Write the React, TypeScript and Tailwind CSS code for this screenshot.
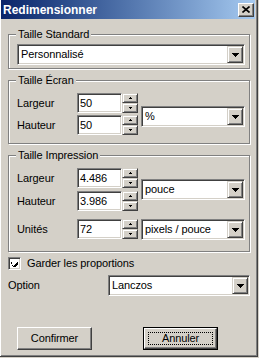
import React from 'react';

const sunken =
  'border border-t-[#808080] border-l-[#808080] border-b-white border-r-white shadow-[inset_1px_1px_0_#404040,inset_-1px_-1px_0_#d4d0c8] bg-white';
const raised =
  'border border-t-[#d4d0c8] border-l-[#d4d0c8] border-b-[#404040] border-r-[#404040] shadow-[inset_1px_1px_0_#fff,inset_-1px_-1px_0_#808080] bg-[#d4d0c8]';
const pushBtn =
  'border border-t-white border-l-white border-b-[#404040] border-r-[#404040] shadow-[inset_-1px_-1px_0_#808080] bg-[#d4d0c8]';

const DownArrow = () => (
  <svg width="7" height="4" viewBox="0 0 7 4" shapeRendering="crispEdges">
    <rect x="0" y="0" width="7" height="1" fill="#000" />
    <rect x="1" y="1" width="5" height="1" fill="#000" />
    <rect x="2" y="2" width="3" height="1" fill="#000" />
    <rect x="3" y="3" width="1" height="1" fill="#000" />
  </svg>
);

const TinyArrow = ({ up }: { up?: boolean }) => (
  <svg width="3" height="2" viewBox="0 0 3 2" shapeRendering="crispEdges">
    {up ? (
      <>
        <rect x="1" y="0" width="1" height="1" fill="#000" />
        <rect x="0" y="1" width="3" height="1" fill="#000" />
      </>
    ) : (
      <>
        <rect x="0" y="0" width="3" height="1" fill="#000" />
        <rect x="1" y="1" width="1" height="1" fill="#000" />
      </>
    )}
  </svg>
);

const Combo = ({ value, className }: { value: string; className: string }) => (
  <div className={`flex h-[21px] p-[1px] ${sunken} ${className}`}>
    <span className="flex-1 pl-[2px] leading-[17px]">{value}</span>
    <div className={`flex h-[17px] w-[16px] items-center justify-center ${raised}`}>
      <DownArrow />
    </div>
  </div>
);

const Spin = ({ value }: { value: string }) => (
  <>
    <div className={`h-[20px] w-[45px] p-[1px] ${sunken}`}>
      <span className="block pl-[1px] leading-[16px]">{value}</span>
    </div>
    <div className="flex h-[20px] w-[16px] flex-col">
      <div className={`flex h-[10px] items-center justify-center ${raised}`}>
        <TinyArrow up />
      </div>
      <div className={`flex h-[10px] items-center justify-center ${raised}`}>
        <TinyArrow />
      </div>
    </div>
  </>
);

const Group = ({
  title,
  className,
  children,
}: {
  title: string;
  className: string;
  children: React.ReactNode;
}) => (
  <div
    className={`relative w-[242px] border border-[#808080] shadow-[inset_1px_1px_0_#fff,1px_1px_0_#fff] pl-[8px] ${className}`}
  >
    <span className="absolute left-[7px] top-[-7px] bg-[#d4d0c8] px-[2px] leading-[13px]">
      {title}
    </span>
    {children}
  </div>
);

const Label = ({ text }: { text: string }) => (
  <span className="flex h-[20px] items-center">{text}</span>
);

export default function App() {
  return (
    <div className="h-[358px] w-[259px] bg-[#d4d0c8] font-['Liberation_Sans',Arial,sans-serif] text-[11px] tracking-[-0.1px] text-black">
      <div className="flex h-[357px] w-[258px] flex-col border-b border-r border-b-[#404040] border-r-[#404040] shadow-[inset_1px_0_0_#fff,inset_-1px_-1px_0_#808080]">
        {/* barre de titre */}
        <div className="ml-[1px] mr-[2px] flex h-[19px] items-center justify-between bg-gradient-to-r from-[#0a246a] to-[#a6caf0] pl-[2px] pr-[1px]">
          <span className="text-[12px] font-bold tracking-normal text-white">Redimensionner</span>
          <div className={`flex h-[14px] w-[16px] items-center justify-center ${pushBtn}`}>
            <svg width="8" height="7" viewBox="0 0 8 7">
              <path d="M0.5 0.5 L7.5 6.5 M7.5 0.5 L0.5 6.5" stroke="#000" strokeWidth="1.6" />
            </svg>
          </div>
        </div>

        <div className="flex flex-col pl-[8px]">
          <Group title="Taille Standard" className="mt-[15px] h-[35px] pt-[9px]">
            <Combo value="Personnalisé" className="w-[228px]" />
          </Group>

          <Group title="Taille Écran" className="mt-[11px] h-[64px] pt-[12px]">
            <div className="flex">
              <div className="grid grid-cols-[60px_45px_16px] gap-y-[2px]">
                <Label text="Largeur" />
                <Spin value="50" />
                <Label text="Hauteur" />
                <Spin value="50" />
              </div>
              <Combo value="%" className="ml-[3px] mt-[13px] w-[104px]" />
            </div>
          </Group>

          <Group title="Taille Impression" className="mt-[11px] h-[97px] pt-[12px]">
            <div className="flex">
              <div className="grid grid-cols-[60px_45px_16px] gap-y-[3px]">
                <Label text="Largeur" />
                <Spin value="4.486" />
                <Label text="Hauteur" />
                <Spin value="3.986" />
              </div>
              <Combo value="pouce" className="ml-[3px] self-center w-[104px]" />
            </div>
            <div className="mt-[8px] flex">
              <div className="grid grid-cols-[60px_45px_16px]">
                <Label text="Unités" />
                <Spin value="72" />
              </div>
              <Combo value="pixels / pouce" className="ml-[3px] w-[104px]" />
            </div>
          </Group>

          <div className="mt-[5px] flex h-[13px] items-center">
            <div className={`flex h-[13px] w-[13px] items-center justify-center ${sunken}`}>
              <svg width="7" height="7" viewBox="0 0 7 7" shapeRendering="crispEdges">
                <path d="M0 2h1v3h1v1h1v-1h1v-1h1v-1h1v-1h1v3h-1v1h-1v1h-1v1h-1v-1h-1v-1h-1z" fill="#000" />
              </svg>
            </div>
            <span className="ml-[6px]">Garder les proportions</span>
          </div>

          <div className="mt-[5px] flex items-center">
            <span className="w-[100px]">Option</span>
            <Combo value="Lanczos" className="w-[142px]" />
          </div>

          <div className="mt-[31px] flex pl-[9px]">
            <div className={`flex h-[23px] w-[75px] items-center justify-center ${pushBtn}`}>
              Confirmer
            </div>
            <div className="ml-[51px] h-[23px] w-[75px] border border-black">
              <div className={`flex h-full w-full items-center justify-center p-[3px] ${pushBtn}`}>
                <div className="flex h-full w-full items-center justify-center border border-dotted border-black">
                  Annuler
                </div>
              </div>
            </div>
          </div>
        </div>
      </div>
    </div>
  );
}
